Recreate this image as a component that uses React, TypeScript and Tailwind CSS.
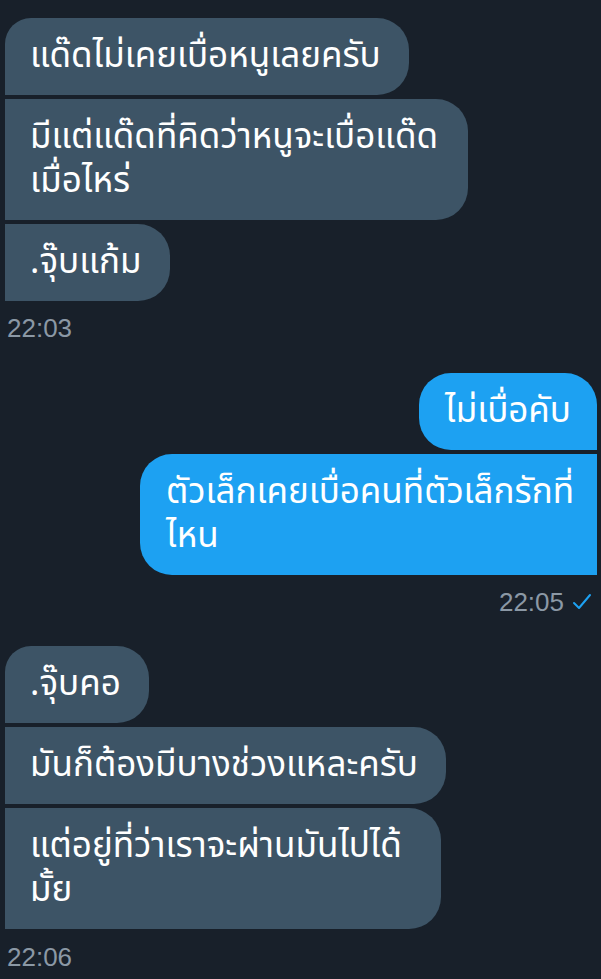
import React from "react";

type Msg = { id: number; lines: string[]; w?: string };

const groupA: Msg[] = [
  { id: 0, lines: ["แด๊ดไม่เคยเบื่อหนูเลยครับ"] },
  { id: 1, lines: ["มีแต่แด๊ดที่คิดว่าหนูจะเบื่อแด๊ด", "เมื่อไหร่"], w: "w-[463px]" },
  { id: 2, lines: [".จุ๊บแก้ม"] },
];

const groupB: Msg[] = [
  { id: 0, lines: ["ไม่เบื่อคับ"] },
  { id: 1, lines: ["ตัวเล็กเคยเบื่อคนที่ตัวเล็กรักที่", "ไหน"], w: "w-[457px]" },
];

const groupC: Msg[] = [
  { id: 0, lines: [".จุ๊บคอ"] },
  { id: 1, lines: ["มันก็ต้องมีบางช่วงแหละครับ"] },
  { id: 2, lines: ["แต่อยู่ที่ว่าเราจะผ่านมันไปได้", "มั้ย"], w: "w-[436px]" },
];

const font = "font-['Noto_Sans_Thai','Noto_Sans','DejaVu_Sans',sans-serif]";

const Bubble = ({ msg, mine, first }: { msg: Msg; mine: boolean; first: boolean }) => (
  <div
    className={`${msg.w ?? "w-fit"} ${font} text-[35px] leading-[44px] text-white py-[16.5px] ${
      mine
        ? `bg-[#1da1f2] pl-[26px] pr-[26px] rounded-l-[32px] ${first ? "rounded-tr-[32px]" : ""}`
        : `bg-[#3d5466] pl-[25px] pr-[28px] rounded-r-[32px] ${first ? "rounded-tl-[26px]" : ""}`
    }`}
  >
    {msg.lines.map((l, i) => (
      <div key={i} className="whitespace-nowrap">
        {l}
      </div>
    ))}
  </div>
);

const Time = ({ text, mine }: { text: string; mine?: boolean }) => (
  <div
    className={`flex items-center gap-[8px] font-['Liberation_Sans',sans-serif] text-[26px] leading-[30px] text-[#8b98a5] ${
      mine ? "justify-end pr-[5px]" : "pl-[2px]"
    }`}
  >
    <span>{text}</span>
    {mine && (
      <svg width="20" height="18" viewBox="0 0 20 18" fill="none">
        <path d="M2 10 L7 15 L18 2" stroke="#1da1f2" strokeWidth="2" strokeLinecap="round" strokeLinejoin="round" />
      </svg>
    )}
  </div>
);

export default function App() {
  return (
    <div className="w-[601px] h-[979px] overflow-hidden bg-[#18202a] pt-[18px] pl-[5px] pr-[4px]">
      <div className="flex flex-col items-start gap-[4px]">
        {groupA.map((m, i) => (
          <Bubble key={m.id} msg={m} mine={false} first={i === 0} />
        ))}
      </div>
      <div className="mt-[12px]">
        <Time text="22:03" />
      </div>
      <div className="mt-[30px] flex flex-col items-end gap-[4px]">
        {groupB.map((m, i) => (
          <Bubble key={m.id} msg={m} mine first={i === 0} />
        ))}
      </div>
      <div className="mt-[12px]">
        <Time text="22:05" mine />
      </div>
      <div className="mt-[29px] flex flex-col items-start gap-[4px]">
        {groupC.map((m, i) => (
          <Bubble key={m.id} msg={m} mine={false} first={i === 0} />
        ))}
      </div>
      <div className="mt-[13px]">
        <Time text="22:06" />
      </div>
    </div>
  );
}
